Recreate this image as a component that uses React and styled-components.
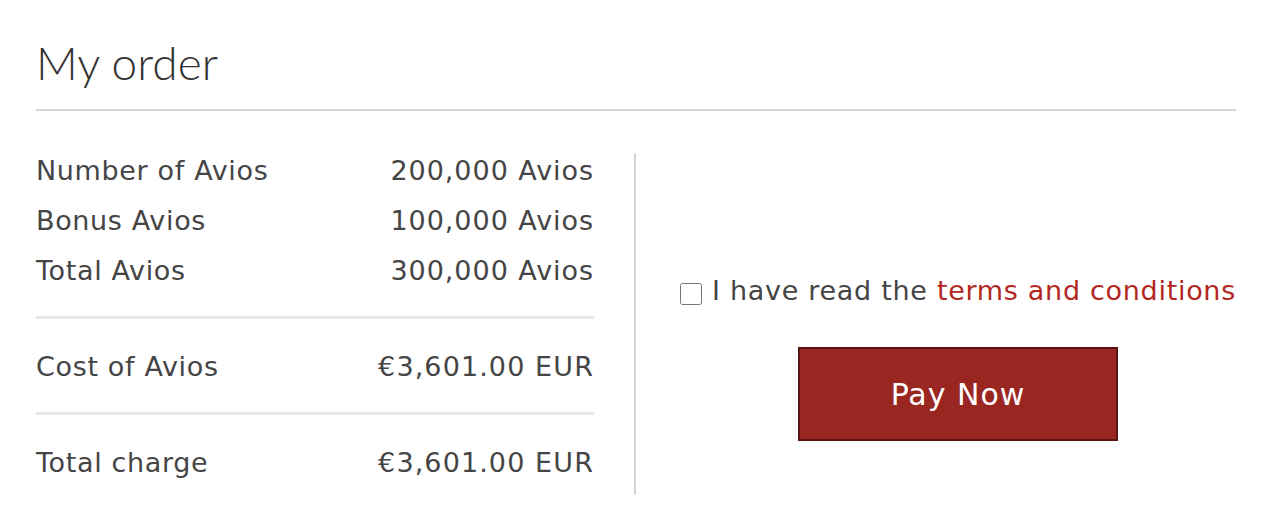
import React from "react";
import styled, { createGlobalStyle } from "styled-components";

const GlobalStyle = createGlobalStyle`
  html, body {
    margin: 0;
    padding: 0;
    background: #fff;
  }
  body {
    font-family: "DejaVu Sans", Verdana, sans-serif;
    color: #454545;
  }
`;

const Page = styled.div`
  width: 1200px;
  padding: 35px 36px 0;
`;

const Title = styled.h1`
  margin: 0;
  padding-bottom: 18px;
  font-family: Lato, "Open Sans", sans-serif;
  font-weight: 300;
  font-size: 46px;
  line-height: 56px;
  color: #333;
  border-bottom: 2px solid #d6d6d6;
`;

const Body = styled.div`
  display: grid;
  grid-template-columns: 600px 1fr;
  margin-top: 42px;
`;

const Summary = styled.div`
  padding-right: 40px;
  border-right: 2px solid #d4d4d4;
`;

const Group = styled.div`
  display: flex;
  flex-direction: column;
  gap: 14px;
  padding: ${(p) => p.$pad || "0"};
  border-bottom: ${(p) => (p.$last ? "none" : "3px solid #e8e8e8")};
`;

const Row = styled.div`
  display: flex;
  justify-content: space-between;
  font-size: 27px;
  letter-spacing: 0.65px;
  line-height: 36px;
`;

const Value = styled.span`
  letter-spacing: ${(p) => (p.$money ? "1.1px" : "0.95px")};
`;

const Actions = styled.div`
  display: flex;
  flex-direction: column;
  align-items: center;
  padding: 120px 0 0 44px;
`;

const Terms = styled.label`
  display: flex;
  align-items: center;
  gap: 10px;
  font-size: 27px;
  letter-spacing: 0.7px;
  line-height: 36px;
  color: #454545;
  white-space: nowrap;
`;

const Box = styled.input`
  width: 22px;
  height: 22px;
  margin: 6px 0 0;
`;

const Link = styled.a`
  color: #b3271f;
  text-decoration: none;
`;

const PayButton = styled.button`
  margin-top: 38px;
  width: 320px;
  height: 94px;
  background: #9a2622;
  border: 2px solid #5a1512;
  color: #fff;
  font-family: "DejaVu Sans", Verdana, sans-serif;
  font-size: 30px;
  letter-spacing: 1px;
  cursor: pointer;
`;

const rows = [
  ["Number of Avios", "200,000 Avios"],
  ["Bonus Avios", "100,000 Avios"],
  ["Total Avios", "300,000 Avios"],
];

export default function App() {
  return (
    <>
      <GlobalStyle />
      <Page>
        <Title>My order</Title>
        <Body>
          <Summary>
            <Group $pad="0 0 27px">
              {rows.map(([label, value]) => (
                <Row key={label}>
                  <span>{label}</span>
                  <Value>{value}</Value>
                </Row>
              ))}
            </Group>
            <Group $pad="30px 0 27px">
              <Row>
                <span>Cost of Avios</span>
                <Value $money>€3,601.00 EUR</Value>
              </Row>
            </Group>
            <Group $pad="30px 0 14px" $last>
              <Row>
                <span>Total charge</span>
                <Value $money>€3,601.00 EUR</Value>
              </Row>
            </Group>
          </Summary>
          <Actions>
            <Terms>
              <Box type="checkbox" />
              <span>
                I have read the <Link href="#">terms and conditions</Link>
              </span>
            </Terms>
            <PayButton>Pay Now</PayButton>
          </Actions>
        </Body>
      </Page>
    </>
  );
}
